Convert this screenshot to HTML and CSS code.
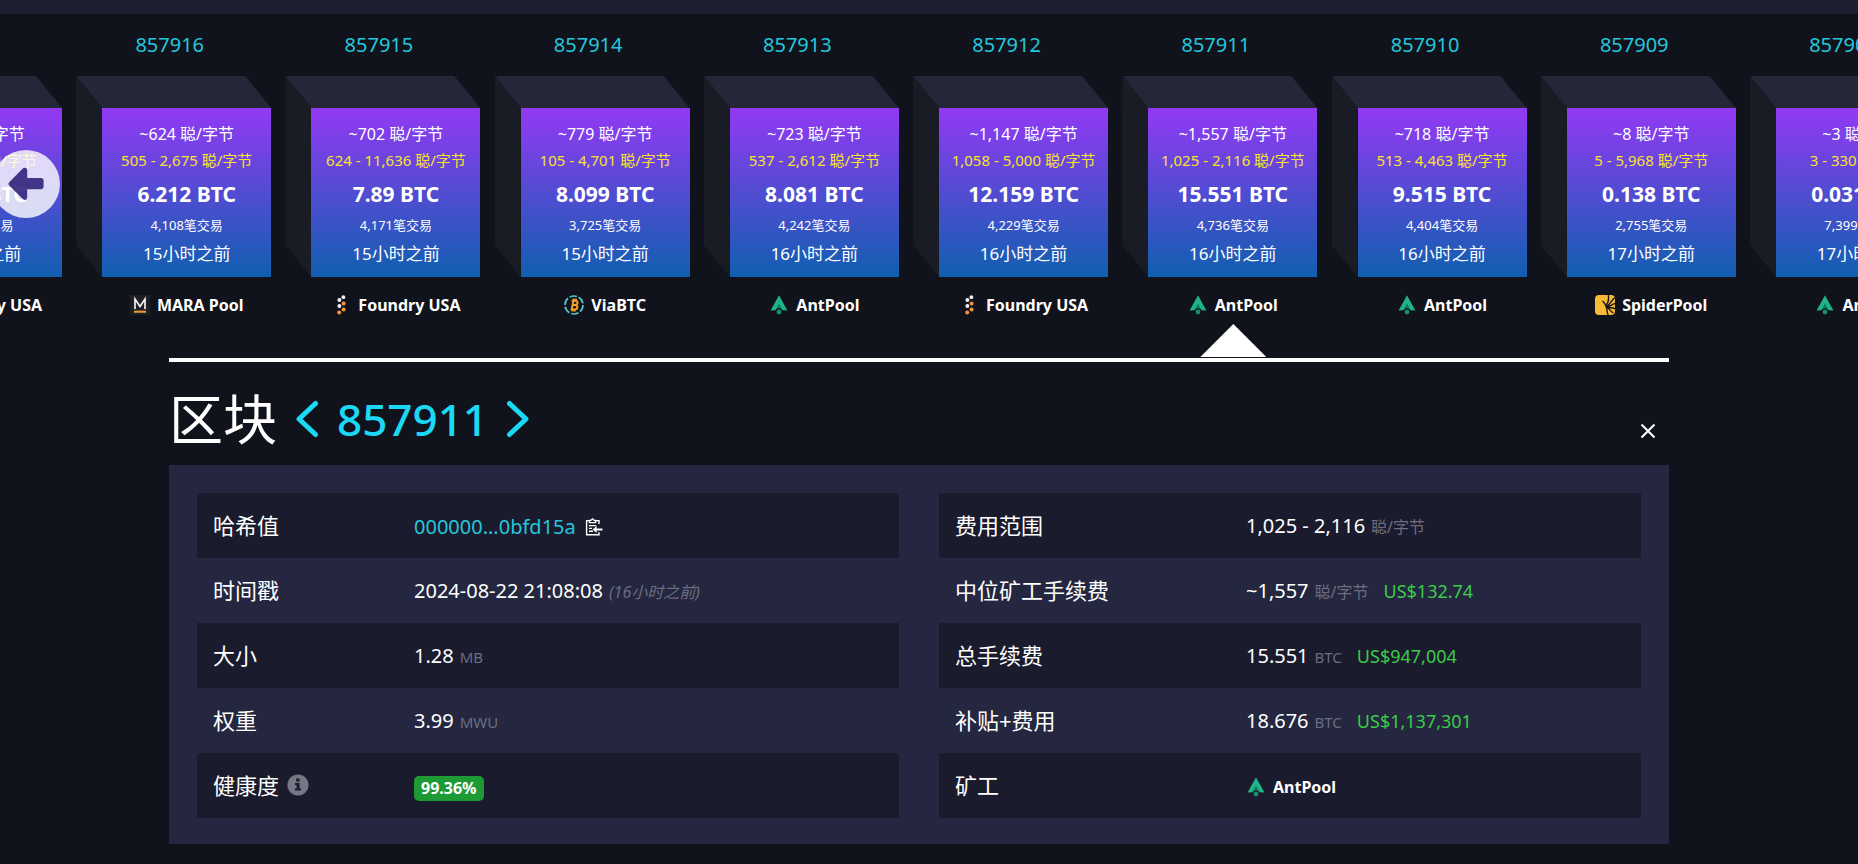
FILE: index.html
```html
<!DOCTYPE html>
<html lang="zh-CN">
<head>
<meta charset="utf-8">
<meta name="viewport" content="width=device-width, initial-scale=1">
<title>区块 857911</title>
<link rel="stylesheet" href="styles.css">
</head>
<body>
<svg class="sprite" aria-hidden="true">
  <symbol id="ant" viewBox="0 0 20 20">
    <path fill="#1fb487" d="M10 0.3 L18.4 15.6 L13.6 15.2 A4 4 0 0 0 6.4 15.2 L1.6 15.6 Z"/>
    <path fill="#0a7d5c" d="M10 8.5 L13.2 14.6 A4 4 0 0 0 6.8 14.6 Z"/>
    <circle cx="10" cy="17" r="2.4" fill="#15936b"/>
  </symbol>
  <symbol id="foundry" viewBox="0 0 20 20">
    <g fill="#f0f1f4"><circle cx="12.4" cy="2.2" r="1.9"/><circle cx="8.4" cy="5" r="2"/><circle cx="8.4" cy="11" r="2"/></g>
    <g fill="#f0953f"><circle cx="12.6" cy="8.4" r="2"/><circle cx="12.6" cy="14.6" r="2"/><circle cx="8.2" cy="17.6" r="2"/></g>
  </symbol>
  <symbol id="mara" viewBox="0 0 20 20">
    <path fill="#1e1f24" d="M0 0h20v20H0z"/>
    <path fill="none" stroke="#f2f2f2" stroke-width="1.7" d="M5 14V4L10 11.5L15 4V14"/>
    <path fill="#dd9a35" d="M4 15.6h12v2.2H4z"/>
  </symbol>
  <symbol id="via" viewBox="0 0 20 20">
    <circle cx="10" cy="10" r="9" fill="none" stroke="#55c2c9" stroke-width="1.7" stroke-dasharray="7.5 1.9"/>
    <path fill="none" stroke="#f5a11d" stroke-width="2" stroke-linejoin="round" d="M6.6 14.4H10.4C14.3 14.4 14.2 10 10.8 10H8.4M10.8 10C14.7 9.8 14.2 5.7 11 5.7H7.6M9.4 5.6L7.7 14.4M9.8 3.6V5.6M12 3.8V5.8M8.6 14.4V16.4M10.8 14.4V16.4"/>
  </symbol>
  <symbol id="spider" viewBox="0 0 20 20">
    <rect width="20" height="20" rx="4" fill="#f9b934"/>
    <g fill="none" stroke="#15171c" stroke-width="1.4" stroke-linecap="round"><path d="M10.5 10.4C13 8.5 13.8 4 13.4 0.6M12 11C15 9.5 16 6 19.4 3M13 11.3C15 11.3 17 9.4 19.7 8.6M13 12C15 13 17 12.4 19.7 13.6M12.4 12.4C14.6 14 15 16 17.8 17.6M11.4 12.6C12.5 14.5 11.5 17 13 19.5M8 6.4L11.5 11"/></g>
    <ellipse cx="12.2" cy="11.5" rx="1.8" ry="1.5" fill="#15171c"/>
  </symbol>
</svg>

<header class="topbar"></header>

<section class="strip" aria-label="区块链">
  <div class="chain">
    <article class="block">
      <a class="height" href="#857917">857917</a>
      <div class="cube"><div class="face">
        <div class="median">~602 聪/字节</div><div class="range">503 - 999 聪/字节</div>
        <div class="total">6.013 BTC</div><div class="count">4,035笔交易</div><div class="age">15小时之前</div>
      </div></div>
      <div class="pool"><svg><use href="#foundry"/></svg>Foundry USA</div>
    </article>
    <article class="block">
      <a class="height" href="#857916">857916</a>
      <div class="cube"><div class="face">
        <div class="median">~624 聪/字节</div><div class="range">505 - 2,675 聪/字节</div>
        <div class="total">6.212 BTC</div><div class="count">4,108笔交易</div><div class="age">15小时之前</div>
      </div></div>
      <div class="pool"><svg><use href="#mara"/></svg>MARA Pool</div>
    </article>
    <article class="block">
      <a class="height" href="#857915">857915</a>
      <div class="cube"><div class="face">
        <div class="median">~702 聪/字节</div><div class="range">624 - 11,636 聪/字节</div>
        <div class="total">7.89 BTC</div><div class="count">4,171笔交易</div><div class="age">15小时之前</div>
      </div></div>
      <div class="pool"><svg><use href="#foundry"/></svg>Foundry USA</div>
    </article>
    <article class="block">
      <a class="height" href="#857914">857914</a>
      <div class="cube"><div class="face">
        <div class="median">~779 聪/字节</div><div class="range">105 - 4,701 聪/字节</div>
        <div class="total">8.099 BTC</div><div class="count">3,725笔交易</div><div class="age">15小时之前</div>
      </div></div>
      <div class="pool"><svg><use href="#via"/></svg>ViaBTC</div>
    </article>
    <article class="block">
      <a class="height" href="#857913">857913</a>
      <div class="cube"><div class="face">
        <div class="median">~723 聪/字节</div><div class="range">537 - 2,612 聪/字节</div>
        <div class="total">8.081 BTC</div><div class="count">4,242笔交易</div><div class="age">16小时之前</div>
      </div></div>
      <div class="pool"><svg><use href="#ant"/></svg>AntPool</div>
    </article>
    <article class="block">
      <a class="height" href="#857912">857912</a>
      <div class="cube"><div class="face">
        <div class="median">~1,147 聪/字节</div><div class="range">1,058 - 5,000 聪/字节</div>
        <div class="total">12.159 BTC</div><div class="count">4,229笔交易</div><div class="age">16小时之前</div>
      </div></div>
      <div class="pool"><svg><use href="#foundry"/></svg>Foundry USA</div>
    </article>
    <article class="block selected">
      <a class="height" href="#857911">857911</a>
      <div class="cube"><div class="face">
        <div class="median">~1,557 聪/字节</div><div class="range">1,025 - 2,116 聪/字节</div>
        <div class="total">15.551 BTC</div><div class="count">4,736笔交易</div><div class="age">16小时之前</div>
      </div></div>
      <div class="pool"><svg><use href="#ant"/></svg>AntPool</div>
    </article>
    <article class="block">
      <a class="height" href="#857910">857910</a>
      <div class="cube"><div class="face">
        <div class="median">~718 聪/字节</div><div class="range">513 - 4,463 聪/字节</div>
        <div class="total">9.515 BTC</div><div class="count">4,404笔交易</div><div class="age">16小时之前</div>
      </div></div>
      <div class="pool"><svg><use href="#ant"/></svg>AntPool</div>
    </article>
    <article class="block">
      <a class="height" href="#857909">857909</a>
      <div class="cube"><div class="face">
        <div class="median">~8 聪/字节</div><div class="range">5 - 5,968 聪/字节</div>
        <div class="total">0.138 BTC</div><div class="count">2,755笔交易</div><div class="age">17小时之前</div>
      </div></div>
      <div class="pool"><svg><use href="#spider"/></svg>SpiderPool</div>
    </article>
    <article class="block">
      <a class="height" href="#857908">857908</a>
      <div class="cube"><div class="face">
        <div class="median">~3 聪/字节</div><div class="range">3 - 330 聪/字节</div>
        <div class="total">0.031 BTC</div><div class="count">7,399笔交易</div><div class="age">17小时之前</div>
      </div></div>
      <div class="pool"><svg><use href="#ant"/></svg>AntPool</div>
    </article>
  </div>
  <button class="scroll-back" type="button" aria-label="返回">
    <svg viewBox="0 0 36 34"><path fill="currentColor" d="M1.4 15 L14.8 1.6 C16.8 0 19.2 1 19.2 3.6 V11 H33 C34.6 11 35.6 12 35.6 13.6 V19.6 C35.6 21.2 34.6 22.2 33 22.2 H19.2 V30 C19.2 32.8 16.8 33.8 14.8 32 L1.4 18.8 C0.2 17.6 0.2 16.2 1.4 15 Z"/></svg>
  </button>
</section>

<main class="content">
  <div class="container">
    <div class="heading">
      <h1 class="title">
        <span class="title-word">区块</span>
        <a class="step" href="#857910" aria-label="上一个"><svg viewBox="0 0 24 38"><path d="M20.5 3.5L4 19L20.5 34.5"/></svg></a>
        <a class="title-height" href="#857911">857911</a>
        <a class="step" href="#857912" aria-label="下一个"><svg viewBox="0 0 24 38"><path d="M3.5 3.5L20 19L3.5 34.5"/></svg></a>
      </h1>
      <button class="close" type="button" aria-label="关闭"><svg viewBox="0 0 16 16"><path d="M1.5 1.5L14.5 14.5M14.5 1.5L1.5 14.5"/></svg></button>
    </div>

    <div class="panel">
      <table class="facts">
        <tbody>
          <tr><th scope="row">哈希值</th><td><span class="line"><a href="#hash">000000...0bfd15a</a><button class="copy" type="button" aria-label="复制"><svg viewBox="0 0 18 18"><path d="M14 6V2.6H10.4M4.4 2.6H1.6V16.8H14V14.2M4.4 4.6V2.4H5.8L7.5 0.9L9.2 2.4H10.6V4.6ZM4 7.6H11.2M4 10.4H7M4 13.2H8"/><path class="solid" d="M7.6 11.4L11.6 8V10.4H17.4V12.6H11.6V15Z"/></svg></button></span></td></tr>
          <tr><th scope="row">时间戳</th><td><span class="line">2024-08-22 21:08:08<i class="unit wide">(16小时之前)</i></span></td></tr>
          <tr><th scope="row">大小</th><td><span class="line">1.28<span class="unit">MB</span></span></td></tr>
          <tr><th scope="row">权重</th><td><span class="line">3.99<span class="unit">MWU</span></span></td></tr>
          <tr><th scope="row"><span class="health">健康度<svg viewBox="0 0 22 22"><circle cx="11" cy="11" r="10.6" fill="#767784"/><path fill="#1a1b2d" d="M9.2 4.6h3.4v3H9.2zM8 9h4.6v5.4H14v2H8v-2h1.6V11H8z"/></svg></span></th><td><span class="badge">99.36%</span></td></tr>
        </tbody>
      </table>
      <table class="facts fees">
        <tbody>
          <tr><th scope="row">费用范围</th><td><span class="line">1,025 - 2,116<span class="unit wide">聪/字节</span></span></td></tr>
          <tr><th scope="row">中位矿工手续费</th><td><span class="line">~1,557<span class="unit wide">聪/字节</span><span class="fiat">US$132.74</span></span></td></tr>
          <tr><th scope="row">总手续费</th><td><span class="line">15.551<span class="unit">BTC</span><span class="fiat">US$947,004</span></span></td></tr>
          <tr><th scope="row">补贴+费用</th><td><span class="line">18.676<span class="unit">BTC</span><span class="fiat">US$1,137,301</span></span></td></tr>
          <tr><th scope="row">矿工</th><td><div class="pool miner"><svg><use href="#ant"/></svg>AntPool</div></td></tr>
        </tbody>
      </table>
    </div>
  </div>
</main>
</body>
</html>
```
FILE: styles.css
```css
* { box-sizing: border-box; }

body {
  margin: 0;
  background: #10131b;
  color: #fff;
  font-family: "Noto Sans", "Noto Sans CJK SC", sans-serif;
  font-size: 20px;
  line-height: 28px;
  overflow-x: hidden;
}

a { color: #1bd8f4; text-decoration: none; }
button { border: 0; padding: 0; background: none; color: inherit; cursor: pointer; }
svg { display: block; }
.sprite { position: absolute; width: 0; height: 0; }

.topbar { height: 14px; background: #1d1f31; }

/* Chain of mined blocks, bleeding off both sides of the window */
.strip {
  position: relative;
  overflow: hidden;
  padding: 17px 0 43px;
}
.chain {
  display: flex;
  justify-content: space-between;
  gap: 14px;
  margin: 0 -87px 0 -133px;
}
.block {
  position: relative;
  flex: 0 0 195px;
}
.height {
  display: block;
  padding-right: 8px;
  text-align: center;
  color: #25c6dc;
}
.cube {
  position: relative;
  margin-top: 17px;
  padding: 32px 0 0 26px;
}
.cube::before,
.cube::after {
  content: "";
  position: absolute;
  top: 0;
  left: 0;
}
.cube::before {
  right: 0;
  height: 32px;
  background: #232738;
  clip-path: polygon(0 0, 169px 0, 100% 100%, 26px 100%);
}
.cube::after {
  bottom: 0;
  width: 26px;
  background: #1a1c25;
  clip-path: polygon(0 0, 100% 32px, 100% 100%, 0 169px);
}
.face {
  height: 169px;
  padding-top: 14px;
  text-align: center;
  white-space: nowrap;
  background: linear-gradient(#9339f4, #105fb0);
}
.median { font-size: 16px; line-height: 24px; }
.range { font-size: 15px; line-height: 28px; color: #f8e32c; }
.total { font-size: 21px; line-height: 40px; font-weight: 700; }
.count { font-size: 13px; line-height: 22px; }
.age { font-size: 17px; line-height: 36px; }

.pool {
  display: flex;
  justify-content: center;
  align-items: center;
  gap: 7px;
  margin: 18px 0 0 26px;
  font-size: 16px;
  line-height: 20px;
  font-weight: 700;
  white-space: nowrap;
}
.pool svg { width: 20px; height: 20px; }

.selected::after {
  content: "";
  position: absolute;
  bottom: -42px;
  left: 78px;
  width: 66px;
  height: 33px;
  background: #fff;
  clip-path: polygon(50% 0, 100% 100%, 0 100%);
}

.scroll-back {
  position: absolute;
  top: 136px;
  left: -8px;
  display: grid;
  place-items: center;
  width: 68px;
  height: 68px;
  border-radius: 50%;
  background: rgba(255, 255, 255, 0.8);
  color: rgba(43, 30, 120, 0.88);
}
.scroll-back svg { width: 36px; height: 34px; }

/* Block details */
.content { padding: 0 20px 20px 0; }
.container {
  max-width: 1500px;
  margin: 0 auto;
  border-top: 4px solid #fff;
}
.heading {
  display: flex;
  justify-content: space-between;
  align-items: center;
  padding: 25px 13px 14px 0;
}
.title {
  display: flex;
  align-items: center;
  gap: 18px;
  margin: 0;
  line-height: 64px;
  font-weight: 400;
}
.title-word { font-size: 54px; }
.title-height { font-size: 44px; font-weight: 500; }
.step svg {
  width: 24px;
  height: 38px;
  fill: none;
  stroke: currentColor;
  stroke-width: 5;
  stroke-linecap: round;
  stroke-linejoin: round;
}
.close { margin-top: 24px; }
.close svg {
  width: 16px;
  height: 16px;
  fill: none;
  stroke: #fff;
  stroke-width: 2;
}

.panel {
  display: grid;
  grid-template-columns: 1fr 1fr;
  gap: 40px;
  padding: 28px 28px 26px;
  background: #24273f;
}
.facts {
  width: 100%;
  border-collapse: collapse;
  table-layout: fixed;
}
.facts tr:nth-child(odd) { background: #1a1b2d; }
.facts th,
.facts td {
  height: 65px;
  padding: 2px 16px 0;
  text-align: left;
  font-weight: 400;
  white-space: nowrap;
}
.facts th {
  width: 201px;
  padding: 0 16px 2px;
  font-size: 22px;
}
.fees th { width: 291px; }
.facts a { color: #25c6dc; }

.line { display: flex; align-items: baseline; }
.unit { margin-left: 6px; font-size: 15px; color: #6c6d80; }
.wide { font-size: 16px; }
.fiat { margin-left: 15px; font-size: 18px; color: #3bcc49; }
.copy { align-self: center; margin-left: 9px; }
.copy svg {
  width: 18px;
  height: 18px;
  fill: none;
  stroke: #fff;
  stroke-width: 1.4;
}
.copy .solid { fill: #fff; stroke: none; }
.health { display: flex; align-items: center; gap: 8px; }
.health svg { width: 22px; height: 22px; }
.badge {
  display: inline-block;
  padding: 0 7px;
  border-radius: 5px;
  background: #1e9a35;
  font-size: 16px;
  line-height: 25px;
  font-weight: 700;
}
.miner { justify-content: flex-start; margin: 0; }
```
